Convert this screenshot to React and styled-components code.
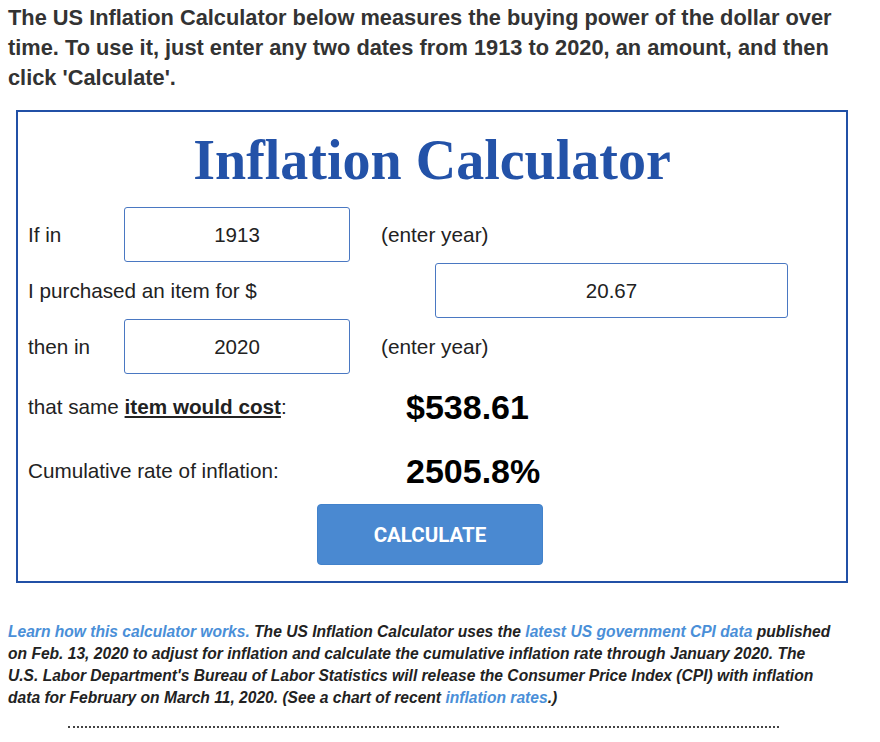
import React from 'react';
import styled, { createGlobalStyle } from 'styled-components';

const GlobalStyle = createGlobalStyle`
  body {
    margin: 0;
    background: #fff;
    font-family: 'Liberation Sans', Arial, sans-serif;
    color: #222;
  }
`;

const App = () => {
  return (
    <Page>
      <GlobalStyle />
      <Intro>
        The US Inflation Calculator below measures the buying power of the dollar over
        <br />
        time. To use it, just enter any two dates from 1913 to 2020, an amount, and then
        <br />
        click 'Calculate'.
      </Intro>

      <CalcBox>
        <Title>Inflation Calculator</Title>

        <FieldRow>
          <Label $width={96}>If in</Label>
          <Field $width={226} defaultValue="1913" />
          <Note>(enter year)</Note>
        </FieldRow>

        <FieldRow>
          <Label $width={407}>I purchased an item for $</Label>
          <Field $width={353} defaultValue="20.67" />
        </FieldRow>

        <FieldRow $gap={2}>
          <Label $width={96}>then in</Label>
          <Field $width={226} defaultValue="2020" />
          <Note>(enter year)</Note>
        </FieldRow>

        <ResultRow>
          <Label $width={378}>
            that same <Strong>item would cost</Strong>:
          </Label>
          <Value>$538.61</Value>
        </ResultRow>

        <ResultRow>
          <Label $width={378}>Cumulative rate of inflation:</Label>
          <Value>2505.8%</Value>
        </ResultRow>

        <ButtonRow>
          <CalcButton>CALCULATE</CalcButton>
        </ButtonRow>
      </CalcBox>

      <Footnote>
        <Link>Learn how this calculator works.</Link> The US Inflation Calculator uses the{' '}
        <Link>latest US government CPI data</Link> published
        <br />
        on Feb. 13, 2020 to adjust for inflation and calculate the cumulative inflation rate
        through January 2020. The
        <br />
        U.S. Labor Department's Bureau of Labor Statistics will release the Consumer Price
        Index (CPI) with inflation
        <br />
        data for February on March 11, 2020. (See a chart of recent{' '}
        <Link>inflation rates</Link>.)
      </Footnote>

      <Dots />
    </Page>
  );
};

export default App;

// Styled-components
const Page = styled.div`
  width: 880px;
  padding: 3px 8px 0;
  box-sizing: border-box;
`;

const Intro = styled.p`
  margin: 0;
  white-space: nowrap;
  font-size: 21.8px;
  font-weight: bold;
  line-height: 30px;
  color: #333;
`;

const CalcBox = styled.div`
  margin: 17px 0 0 8px;
  width: 832px;
  height: 473px;
  box-sizing: border-box;
  border: 2px solid #2150a6;
  padding: 0 10px;
`;

const Title = styled.h1`
  margin: 0;
  height: 95px;
  display: flex;
  align-items: center;
  justify-content: center;
  font-family: 'Liberation Serif', 'Times New Roman', serif;
  font-size: 56px;
  font-weight: bold;
  color: #2352a8;
`;

const FieldRow = styled.div`
  display: flex;
  align-items: center;
  height: 55px;
  margin-bottom: ${(p) => p.$gap || 1}px;
`;

const Label = styled.div`
  width: ${(p) => p.$width}px;
  flex-shrink: 0;
  font-size: 20.7px;
  color: #222;
`;

const Strong = styled.span`
  font-weight: bold;
  text-decoration: underline;
`;

const Field = styled.input`
  width: ${(p) => p.$width}px;
  height: 55px;
  box-sizing: border-box;
  border: 1px solid #4a78c2;
  border-radius: 3px;
  font-family: 'Liberation Sans', Arial, sans-serif;
  font-size: 20.5px;
  color: #222;
  text-align: center;
  outline: none;
  padding: 0;
`;

const Note = styled.div`
  margin-left: 31px;
  font-size: 20.8px;
  color: #222;
`;

const ResultRow = styled.div`
  display: flex;
  align-items: center;
  height: 62px;
  margin-top: 2px;
`;

const Value = styled.div`
  font-size: 34px;
  font-weight: bold;
  color: #000;
`;

const ButtonRow = styled.div`
  display: flex;
  padding-left: 289px;
  margin-top: 2px;
`;

const CalcButton = styled.button`
  width: 226px;
  height: 61px;
  border: 1px solid #4282cb;
  border-radius: 4px;
  background: #4a89d1;
  color: #fff;
  font-family: Roboto, 'Liberation Sans', sans-serif;
  font-size: 20.5px;
  font-weight: bold;
  cursor: pointer;
`;

const Footnote = styled.p`
  margin: 38px 0 0;
  white-space: nowrap;
  font-size: 15.6px;
  font-weight: bold;
  font-style: italic;
  line-height: 22px;
  color: #222;
`;

const Link = styled.a`
  color: #4a8fd8;
  text-decoration: none;
`;

const Dots = styled.div`
  margin: 17px 0 0 60px;
  width: 711px;
  border-top: 2px dotted #444;
`;
